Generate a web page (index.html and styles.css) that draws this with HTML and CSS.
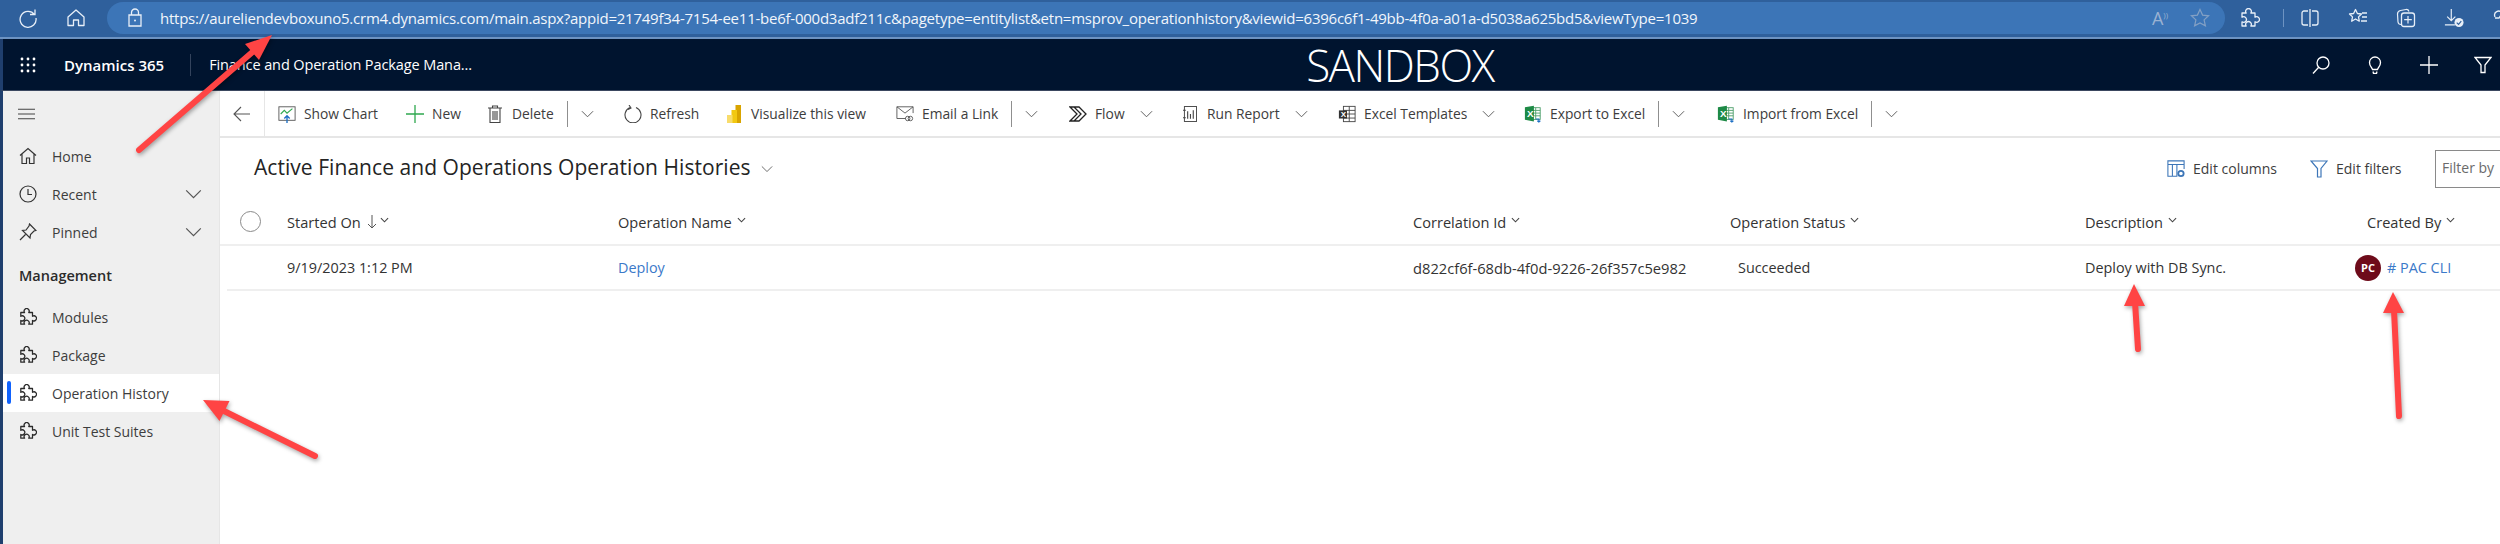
FILE: index.html
```html
<!DOCTYPE html>
<html lang="en">
<head>
<meta charset="utf-8">
<title>Active Finance and Operations Operation Histories</title>
<link rel="stylesheet" href="styles.css">
</head>
<body>
<svg class="defs" width="0" height="0">
  <symbol id="puzzle" viewBox="0 0 20 20"><path d="M2 5h4.200a2.800 2.800 0 1 1 4.600 0H15v4.200a2.800 2.800 0 1 1 0 4.600V18h-4.200a2.800 2.800 0 1 0-4.600 0H2v-4.200a2.800 2.800 0 1 0 0-4.600z" fill="none" stroke="#2b2b2b" stroke-width="1.400" stroke-linejoin="round"/></symbol>
  <symbol id="chev" viewBox="0 0 14 8"><path d="M1 1l6 6 6-6" fill="none" stroke="#555" stroke-width="1"/></symbol>
  <symbol id="chevs" viewBox="0 0 10 6"><path d="M1 1l4 4 4-4" fill="none" stroke="#444" stroke-width="1.200"/></symbol>
</svg>

<header class="chrome">
  <svg class="ci ci-refresh" viewBox="0 0 20 20"><path d="M16.500 6.500A8 8 0 1 0 18 10M17 1.500v5h-5" fill="none" stroke="#e8eff8" stroke-width="1.300"/></svg>
  <svg class="ci ci-home" viewBox="0 0 20 20"><path d="M2 9l8-7 8 7v8.500h-5.500V12h-5v5.500H2z" fill="none" stroke="#e8eff8" stroke-width="1.300" stroke-linejoin="round"/></svg>
  <div class="pill">
    <svg class="ci ci-lock" viewBox="0 0 14 20"><path d="M3.500 7V4.500a3.500 3.500 0 0 1 7 0V7M1 7h12v11H1z" fill="none" stroke="#e8eff8" stroke-width="1.300"/><circle cx="7" cy="12.500" r="1" fill="#e8eff8"/></svg>
    <span class="url">https://aureliendevboxuno5.crm4.dynamics.com/main.aspx?appid=21749f34-7154-ee11-be6f-000d3adf211c&amp;pagetype=entitylist&amp;etn=msprov_operationhistory&amp;viewid=6396c6f1-49bb-4f0a-a01a-d5038a625bd5&amp;viewType=1039</span>
    <span class="read">A<sup>))</sup></span>
    <svg class="ci ci-star" viewBox="0 0 20 20"><path d="M10 1.500l2.600 5.600 6 .7-4.500 4.100 1.300 6L10 15l-5.400 2.900 1.300-6-4.500-4.100 6-.7z" fill="none" stroke="#83a0c4" stroke-width="1.200"/></svg>
  </div>
  <div class="chrome-tools">
    <svg class="ci" viewBox="0 0 20 20"><path d="M2 5h4.200a2.800 2.800 0 1 1 4.600 0H15v4.200a2.800 2.800 0 1 1 0 4.600V18h-4.200a2.800 2.800 0 1 0-4.600 0H2v-4.200a2.800 2.800 0 1 0 0-4.600z" fill="none" stroke="#e8eff8" stroke-width="1.300" stroke-linejoin="round"/></svg>
    <span class="chrome-sep"></span>
    <svg class="ci" viewBox="0 0 20 20"><path d="M10 1v18M8 3H4a2 2 0 0 0-2 2v10a2 2 0 0 0 2 2h4M12 3h4a2 2 0 0 1 2 2v10a2 2 0 0 1-2 2h-4" fill="none" stroke="#e8eff8" stroke-width="1.300"/></svg>
    <svg class="ci" viewBox="0 0 20 20"><path d="M7.500 1.500l1.900 4 4.100.5-3 2.900.8 4.300-3.800-2.200-3.800 2.200.8-4.300-3-2.900 4.100-.5zM14 5h5M14 9h5M13 13h6" fill="none" stroke="#e8eff8" stroke-width="1.300" stroke-linejoin="round"/></svg>
    <svg class="ci" viewBox="0 0 20 20"><path d="M5 16.500c-2 0-2.800-1-3-2.500L1.500 6c0-2 1-3 3-3.500L10 1.500c1.500-.2 2.500.5 3 2" fill="none" stroke="#e8eff8" stroke-width="1.200"/><rect x="5.500" y="5" width="13" height="13.500" rx="2.500" fill="none" stroke="#e8eff8" stroke-width="1.300"/><path d="M12 8v7.500M8.200 11.700h7.600" stroke="#e8eff8" stroke-width="1.200"/></svg>
    <svg class="ci" viewBox="0 0 22 22"><path d="M8 1v13M3.500 9.500L8 14l4.500-4.500M1 18.500h11" fill="none" stroke="#e8eff8" stroke-width="1.300"/><circle cx="16.500" cy="16" r="5" fill="#e8eff8"/><path d="M14 16l2 2 3-3.500" fill="none" stroke="#2f609c" stroke-width="1.300"/></svg>
    <svg class="ci" viewBox="0 0 20 20"><path d="M3 9c-2-5 4-8 7-4 3-4 9-1 7 4M3 10h4l2-3 2 5 1-2h5" fill="none" stroke="#e8eff8" stroke-width="1.300"/></svg>
  </div>
</header>

<div class="appbar">
  <svg class="waffle" viewBox="0 0 16 16"><g fill="#fff"><circle cx="2" cy="2" r="1.400"/><circle cx="8" cy="2" r="1.400"/><circle cx="14" cy="2" r="1.400"/><circle cx="2" cy="8" r="1.400"/><circle cx="8" cy="8" r="1.400"/><circle cx="14" cy="8" r="1.400"/><circle cx="2" cy="14" r="1.400"/><circle cx="8" cy="14" r="1.400"/><circle cx="14" cy="14" r="1.400"/></g></svg>
  <span class="brand">Dynamics 365</span>
  <span class="brand-sep"></span>
  <span class="appname">Finance and Operation Package Mana...</span>
  <span class="sandbox">SANDBOX</span>
  <div class="app-tools">
    <svg class="ai" viewBox="0 0 18 18"><circle cx="11" cy="7" r="6" fill="none" stroke="#fff" stroke-width="1.300"/><path d="M6.700 11.300L1 17.500" stroke="#fff" stroke-width="1.300"/></svg>
    <svg class="ai" viewBox="0 0 18 18"><path d="M6.500 13.500C5.500 11 3.500 10 3.500 6.500a5.500 5.500 0 0 1 11 0c0 3.500-2 4.500-3 7zM7 15.500l.5 2h3l.5-2" fill="none" stroke="#fff" stroke-width="1.300"/></svg>
    <svg class="ai" viewBox="0 0 18 18"><path d="M9 0v18M0 9h18" stroke="#fff" stroke-width="1.300"/></svg>
    <svg class="ai" viewBox="0 0 18 18"><path d="M1 1.500h16L11 9v7.500H7V9z" fill="none" stroke="#fff" stroke-width="1.300"/></svg>
  </div>
</div>

<div class="workspace">
  <nav class="side">
    <svg class="burger" viewBox="0 0 18 12"><path d="M0 1h18M0 6h18M0 11h18" stroke="#444" stroke-width="1.200"/></svg>
    <a class="nav-item"><svg class="ni" viewBox="0 0 18 18"><path d="M1 8.500L9 1.500l8 7M3 7v9.500h4.500V11h3v5.500H15V7" fill="none" stroke="#333" stroke-width="1.200"/></svg><span>Home</span></a>
    <a class="nav-item"><svg class="ni" viewBox="0 0 18 18"><circle cx="9" cy="9" r="8" fill="none" stroke="#333" stroke-width="1.200"/><path d="M9 4v5.500h4" fill="none" stroke="#333" stroke-width="1.200"/></svg><span>Recent</span><svg class="nav-chev"><use href="#chev"/></svg></a>
    <a class="nav-item"><svg class="ni" viewBox="0 0 18 18"><path d="M1 17l5.500-5.500M10.500 1l6.500 6.500-2 .5-3.500 3.500-.5 3.500-7.500-7.500 3.500-.5L10 3z" fill="none" stroke="#333" stroke-width="1.200"/></svg><span>Pinned</span><svg class="nav-chev"><use href="#chev"/></svg></a>
    <div class="nav-group">Management</div>
    <a class="nav-item"><svg class="ni"><use href="#puzzle"/></svg><span>Modules</span></a>
    <a class="nav-item"><svg class="ni"><use href="#puzzle"/></svg><span>Package</span></a>
    <a class="nav-item nav-active"><svg class="ni"><use href="#puzzle"/></svg><span>Operation History</span></a>
    <a class="nav-item"><svg class="ni"><use href="#puzzle"/></svg><span>Unit Test Suites</span></a>
  </nav>

  <main class="main">
    <div class="cmdbar">
      <div class="back"><svg class="back-arrow" viewBox="0 0 18 16"><path d="M17 8H1M8 1L1 8l7 7" fill="none" stroke="#555" stroke-width="1.100"/></svg></div>
      <div class="cmds">
        <div class="cmd"><svg class="ic" viewBox="0 0 20 20"><rect x="1" y="2" width="18" height="15" fill="none" stroke="#555"/><path d="M3 10l4-4 3 3 6-5" fill="none" stroke="#2fa84f" stroke-width="1.300"/><path d="M10 20v-8M7 15l3-3 3 3" fill="none" stroke="#1d6fc4" stroke-width="1.500"/></svg><span>Show Chart</span></div>
        <div class="cmd"><svg class="ic" viewBox="0 0 18 18"><path d="M9 0v18M0 9h18" stroke="#2fa84f" stroke-width="1.300"/></svg><span>New</span></div>
        <div class="cmd"><svg class="ic ic-sm" viewBox="0 0 14 18"><path d="M0 3h14M4.500 3V1h5v2M2 3v14.500h10V3M5 6v9M7 6v9M9 6v9" fill="none" stroke="#444" stroke-width="1.100"/></svg><span>Delete</span><i class="vsep"></i><svg class="cv"><use href="#chev"/></svg></div>
        <div class="cmd"><svg class="ic" viewBox="0 0 18 18"><path d="M12 2.500a8 8 0 1 1-6 0M5 0l2 3-3 1.500" fill="none" stroke="#444" stroke-width="1.100"/></svg><span>Refresh</span></div>
        <div class="cmd"><svg class="ic ic-sm" viewBox="0 0 14 18"><rect x="8.500" y="0" width="5.500" height="18" fill="#d9a400"/><rect x="4.500" y="5" width="5.500" height="13" fill="#f2c811"/><rect x="0" y="10" width="5.500" height="8" fill="#f8dc6c"/></svg><span>Visualize this view</span></div>
        <div class="cmd"><svg class="ic" viewBox="0 0 20 18"><path d="M11 14H1V1h18v7M1 1l9 7 9-7" fill="none" stroke="#555"/><circle cx="13" cy="14" r="2.500" fill="none" stroke="#555"/><circle cx="16" cy="14" r="2.500" fill="none" stroke="#555"/></svg><span>Email a Link</span><i class="vsep"></i><svg class="cv"><use href="#chev"/></svg></div>
        <div class="cmd"><svg class="ic" viewBox="0 0 18 16"><path d="M1 1h9l7 7-7 7H1l7-7zM5 1l7 7-7 7" fill="none" stroke="#222" stroke-width="1.300"/></svg><span>Flow</span><svg class="cv cv-gap"><use href="#chev"/></svg></div>
        <div class="cmd"><svg class="ic ic-sm" viewBox="0 0 15 18"><rect x="1.500" y="1" width="13" height="16" fill="none" stroke="#444"/><path d="M5 6v8M8 9v5M11 5v9M0 5h3M0 13h3" fill="none" stroke="#444" stroke-width="1.200"/></svg><span>Run Report</span><svg class="cv cv-gap"><use href="#chev"/></svg></div>
        <div class="cmd"><svg class="ic" viewBox="0 0 20 20"><rect x="6" y="1.500" width="13" height="17" fill="none" stroke="#444"/><path d="M12.500 1.500v17M6 6h13M6 10h13M6 14.500h13" stroke="#444"/><rect x="1" y="6" width="9" height="9" fill="#333"/><text x="3" y="13.500" class="xl-x xl-x-sm">X</text></svg><span>Excel Templates</span><svg class="cv cv-gap"><use href="#chev"/></svg></div>
        <div class="cmd"><svg class="ic" viewBox="0 0 20 20"><rect x="8" y="3" width="10" height="13" fill="#fff" stroke="#4c9e6a"/><path d="M13 3v13M8 6h10M8 9h10M8 12h10" stroke="#4c9e6a"/><path d="M1 2.500L11 .8v17.500L1 16.500z" fill="#1e8a46"/><text x="3.200" y="13" class="xl-x">X</text><path d="M13 15.500h3.500v3M14.800 17.500l1.700 1.500 1.700-1.500" fill="none" stroke="#1d6fc4" stroke-width="1.200"/></svg><span>Export to Excel</span><i class="vsep"></i><svg class="cv"><use href="#chev"/></svg></div>
        <div class="cmd"><svg class="ic" viewBox="0 0 20 20"><rect x="8" y="3" width="10" height="13" fill="#fff" stroke="#4c9e6a"/><path d="M13 3v13M8 6h10M8 9h10M8 12h10" stroke="#4c9e6a"/><path d="M1 2.500L11 .8v17.500L1 16.500z" fill="#1e8a46"/><text x="3.200" y="13" class="xl-x">X</text><path d="M13 15.500h3.500v3M14.800 17.500l1.700 1.500 1.700-1.500" fill="none" stroke="#1d6fc4" stroke-width="1.200"/></svg><span>Import from Excel</span><i class="vsep"></i><svg class="cv"><use href="#chev"/></svg></div>
      </div>
    </div>

    <div class="titlebar">
      <h1 class="title">Active Finance and Operations Operation Histories</h1>
      <svg class="title-chev"><use href="#chev"/></svg>
      <div class="view-tools">
        <div class="vt"><svg class="vt-ic" viewBox="0 0 20 20"><path d="M1 1h18v4H1zM1 5v13h5V5M6 5h5v13H1M19 5v5" fill="none" stroke="#3d76b8" stroke-width="1.200"/><circle cx="15.500" cy="15" r="3" fill="none" stroke="#3d76b8" stroke-width="2"/></svg><span>Edit columns</span></div>
        <div class="vt"><svg class="vt-ic" viewBox="0 0 18 18"><path d="M1 1h16l-6 7.500V17H7.500V8.500z" fill="none" stroke="#3d76b8" stroke-width="1.200"/></svg><span>Edit filters</span></div>
        <div class="filterbox">Filter by</div>
      </div>
    </div>

    <div class="grid">
      <div class="th th-check"><span class="radio"></span></div>
      <div class="th">Started On<svg class="sort" viewBox="0 0 10 14"><path d="M5 0v13M1 9l4 4 4-4" fill="none" stroke="#555"/></svg><svg class="hc hc-near"><use href="#chevs"/></svg></div>
      <div class="th">Operation Name<svg class="hc"><use href="#chevs"/></svg></div>
      <div class="th">Correlation Id<svg class="hc"><use href="#chevs"/></svg></div>
      <div class="th">Operation Status<svg class="hc"><use href="#chevs"/></svg></div>
      <div class="th">Description<svg class="hc"><use href="#chevs"/></svg></div>
      <div class="th">Created By<svg class="hc"><use href="#chevs"/></svg></div>

      <div class="td"></div>
      <div class="td">9/19/2023 1:12 PM</div>
      <div class="td"><a class="link">Deploy</a></div>
      <div class="td td-id">d822cf6f-68db-4f0d-9226-26f357c5e982</div>
      <div class="td td-status">Succeeded</div>
      <div class="td">Deploy with DB Sync.</div>
      <div class="td td-owner"><span class="avatar">PC</span><a class="link">#&nbsp;PAC CLI</a></div>
    </div>
  </main>
</div>

<svg class="arrows" viewBox="0 0 2500 544">
  <g class="arrow">
    <path d="M139 150L256 49" class="shaft"/><path d="M272 35L259 60L245 44z" class="head"/>
    <path d="M315 456L222 410" class="shaft"/><path d="M203 400L229.500 401L219.500 421z" class="head"/>
    <path d="M2138 349L2135 302" class="shaft"/><path d="M2134 284L2145 306L2124 306z" class="head"/>
    <path d="M2399 416L2394 310" class="shaft"/><path d="M2393 292L2404 313L2383 313z" class="head"/>
  </g>
</svg>
</body>
</html>
```

FILE: styles.css
```css
* { box-sizing: border-box; }
html, body { margin: 0; height: 100%; }
body {
  position: relative;
  width: 2500px;
  height: 544px;
  overflow: hidden;
  background: #fff;
  color: #2b2b2b;
  font-family: "Open Sans", "Noto Sans", sans-serif;
  font-size: 14px;
}
svg { display: block; flex: none; }
.defs { position: absolute; }
.xl-x { font: 700 11px "Liberation Sans", sans-serif; fill: #fff; }
.xl-x-sm { font-size: 9px; }

/* browser bar */
.chrome {
  display: flex;
  align-items: center;
  height: 39px;
  padding: 2px 0 3px 18px;
  background: #2f609c;
  border-bottom: 2px solid #6d93c2;
}
.ci { width: 20px; height: 20px; }
.ci-home { margin-left: 28px; }
.ci-lock { width: 14px; }
.pill {
  display: flex;
  flex: none;
  align-items: center;
  width: 2118px;
  height: 32px;
  margin-left: 21px;
  padding: 0 15px 0 21px;
  background: #3c75b7;
  border-radius: 16px;
}
.url {
  margin-left: 18px;
  color: #f2f6fb;
  font-size: 15px;
  letter-spacing: -0.240px;
  white-space: nowrap;
}
.read { margin-left: auto; color: #9ab2d2; font-size: 18px; }
.read sup { font-size: 8px; }
.ci-star { margin-left: 22px; }
.chrome-tools {
  display: flex;
  flex: none;
  align-items: center;
  gap: 28px;
  margin-left: 15px;
}
.chrome-sep { width: 1px; height: 18px; margin: 0 -12px 0 -5px; background: #6d93c2; }

/* dynamics bar */
.appbar {
  display: flex;
  align-items: center;
  height: 52px;
  padding-left: 17px;
  border-left: 3px solid #1f3f6e;
  background: #00142f;
  color: #fff;
  border-bottom: 1px solid #3b4860;
}
.waffle { width: 16px; height: 16px; }
.brand { margin-left: 28px; font-size: 15px; font-weight: 600; white-space: nowrap; }
.brand-sep { width: 1px; height: 22px; margin-left: 26px; background: #33435c; }
.appname { margin-left: 18px; width: 270px; font-size: 14.500px; letter-spacing: -0.100px; white-space: nowrap; }
.sandbox { margin-left: 827px; font-size: 44px; font-weight: 300; letter-spacing: -1.500px; line-height: 50px; white-space: nowrap; }
.app-tools { display: flex; gap: 36px; margin-left: auto; padding-right: 8px; }
.ai { width: 18px; height: 18px; }

/* workspace */
.workspace { display: flex; height: 453px; border-left: 3px solid #1f3f6e; }
.side {
  width: 217px;
  flex: none;
  padding-top: 17px;
  background: #efefef;
  border-right: 1px solid #e6e6e6;
}
.burger { width: 17px; height: 12px; margin: 0 0 17px 15px; }
.nav-item {
  position: relative;
  display: flex;
  align-items: center;
  height: 38px;
  padding-left: 16px;
  color: #3d3d3d;
  font-size: 14px;
}
.nav-item span { margin-left: 15px; white-space: nowrap; }
.ni { width: 18px; height: 18px; }
.nav-chev { width: 17px; height: 10px; margin-left: auto; margin-right: 17px; }
.nav-group { margin: 5px 0 0 16px; height: 42px; line-height: 40px; font-size: 14.500px; font-weight: 600; color: #2b2b2b; }
.nav-active { background: #fff; }
.nav-active::before {
  content: "";
  position: absolute;
  left: 4px;
  top: 7px;
  width: 4px;
  height: 23px;
  border-radius: 2px;
  background: #0f62fe;
}

.main { flex: 1; min-width: 0; overflow: hidden; }

/* command bar */
.cmdbar { display: flex; height: 47px; border-bottom: 2px solid #e6e6e6; }
.back {
  display: flex;
  align-items: center;
  width: 45px;
  padding-left: 13px;
  border-right: 1px solid #e6e6e6;
}
.back-arrow { width: 18px; height: 16px; }
.cmds {
  display: grid;
  grid-template-columns: 128px 82px 136px 103px 169px 173px 114px 155px 186px 193px 1fr;
  margin-left: 13px;
  align-items: center;
  font-size: 13.800px;
  color: #3d3d3d;
}
.cmd { display: flex; align-items: center; white-space: nowrap; }
.ic { width: 18px; height: 18px; margin-right: 8px; }
.ic-sm { width: 14px; margin-right: 10px; }
.vsep { width: 1px; height: 26px; margin: 0 13px; background: #8f8f8f; }
.cv { width: 13px; height: 8px; }
.cv-gap { margin-left: 15px; }

/* title row */
.titlebar { display: flex; align-items: center; height: 61px; padding-left: 34px; }
.title { margin: 0 0 3px; font-size: 21px; font-weight: 500; letter-spacing: 0.050px; color: #242424; white-space: nowrap; }
.title-chev { width: 12px; height: 8px; margin-left: 10px; margin-top: 1px; }
.view-tools {
  display: grid;
  grid-template-columns: 143px 125px 120px;
  align-items: center;
  margin-left: auto;
  margin-right: -55px;
}
.vt { display: flex; align-items: center; gap: 8px; color: #3d3d3d; font-size: 14px; white-space: nowrap; }
.vt-ic { width: 18px; height: 18px; }
.filterbox {
  height: 38px;
  padding-left: 6px;
  line-height: 34px;
  border: 1px solid #8a8a8a;
  color: #6b6b6b;
  white-space: nowrap;
}

/* grid */
.grid {
  display: grid;
  grid-template-columns: 60px 331px 795px 317px 355px 282px 1fr;
  grid-template-rows: 47px 45px;
  margin-left: 7px;
}
.th {
  display: flex;
  align-items: center;
  font-weight: 500;
  font-size: 14.600px;
  color: #333;
  white-space: nowrap;
  border-bottom: 2px solid #efefef;
}
.th-check { margin-left: -7px; padding-left: 20px; }
.radio { width: 21px; height: 21px; border: 1px solid #8a8a8a; border-radius: 50%; }
.sort { width: 10px; height: 14px; margin-left: 6px; }
.hc { width: 9px; height: 6px; margin: -3px 0 0 5px; }
.hc-near { margin-left: 3px; }
.td {
  display: flex;
  align-items: center;
  font-size: 14.400px;
  color: #333;
  white-space: nowrap;
  border-bottom: 2px solid #efefef;
}
.td-id { font-size: 14.700px; }
.td-status { padding-left: 8px; }
.td-owner { margin-left: -12px; }
.link { color: #3b79c9; }
.avatar {
  display: flex;
  align-items: center;
  justify-content: center;
  width: 26px;
  height: 26px;
  margin-right: 6px;
  border-radius: 50%;
  background: #6e0b1a;
  color: #fff;
  font-size: 11px;
  font-weight: 700;
}

/* annotation arrows */
.arrows { position: absolute; left: 0; top: 0; width: 2500px; height: 544px; pointer-events: none; }
.arrow { filter: drop-shadow(1px 2px 2px rgba(0, 0, 0, .35)); }
.shaft { fill: none; stroke: #ff4444; stroke-width: 6; stroke-linecap: round; }
.head { fill: #ff4444; }
```
